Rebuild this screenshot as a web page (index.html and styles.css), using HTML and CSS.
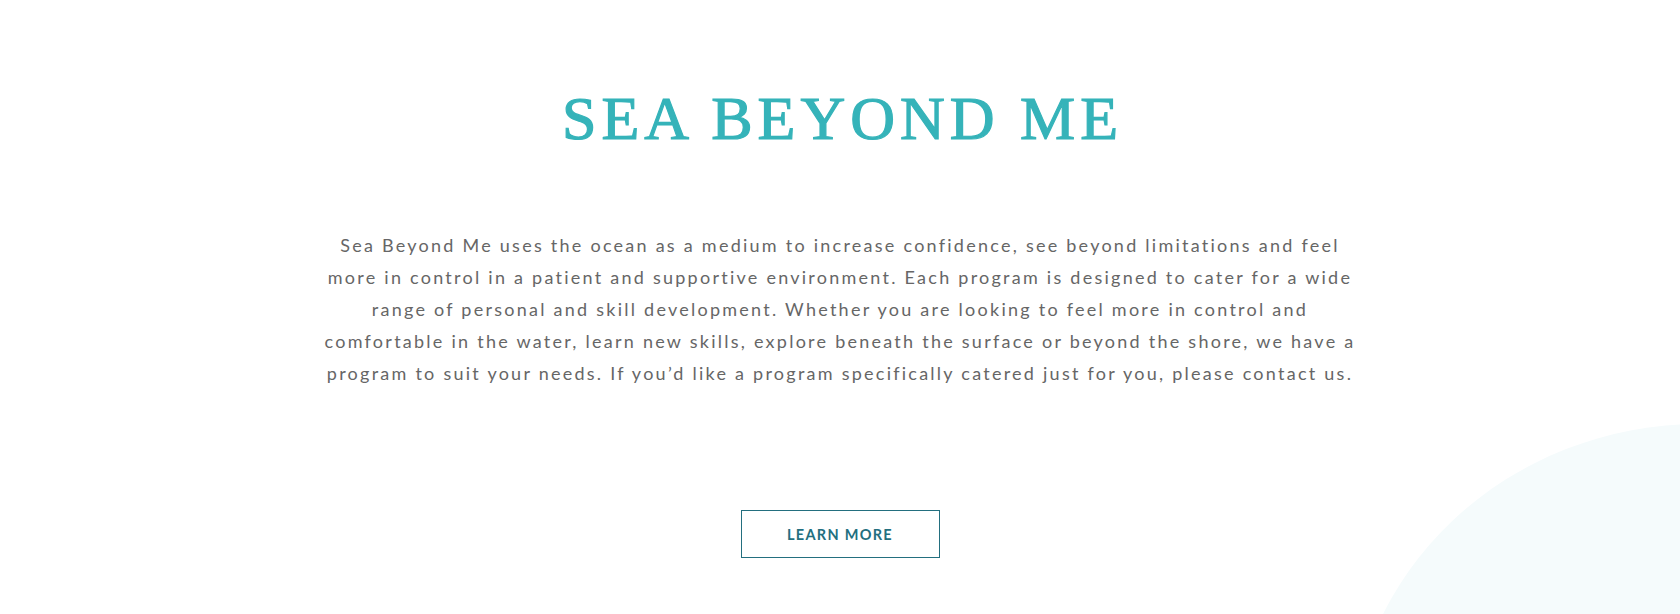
FILE: index.html
```html
<!DOCTYPE html>
<html lang="en">
<head>
    <meta charset="UTF-8">
    <meta name="viewport" content="width=device-width, initial-scale=1.0">
    <title>Sea Beyond Me</title>
    <link rel="stylesheet" href="styles.css">
</head>
<body>
    <section class="intro">
        <div class="wave"></div>
        <h1 class="title">SEA BEYOND ME</h1>
        <p class="lead">Sea Beyond Me uses the ocean as a medium to increase confidence, see beyond limitations and feel more in control in a patient and supportive environment. Each program is designed to cater for a wide range of personal and skill development. Whether you are looking to feel more in control and comfortable in the water, learn new skills, explore beneath the surface or beyond the shore, we have a program to suit your needs. If you’d like a program specifically catered just for you, please contact us.</p>
        <a class="button" href="#">LEARN MORE</a>
    </section>
</body>
</html>
```

FILE: styles.css
```css
body, html {
    margin: 0;
    padding: 0;
    background: #fff;
}
.intro {
    position: relative;
    height: 614px;
    box-sizing: border-box;
    padding-top: 81px;
    overflow: hidden;
    display: flex;
    flex-direction: column;
    align-items: center;
}
.wave {
    position: absolute;
    left: 1350px;
    top: 424px;
    width: 700px;
    height: 660px;
    border-radius: 50%;
    background: #f5fbfc;
    z-index: 0;
}
.title, .lead, .button {
    position: relative;
    z-index: 1;
}
.title {
    margin: 0;
    padding-left: 5px;
    font-family: "Liberation Serif", serif;
    font-weight: normal;
    font-size: 62px;
    line-height: 74px;
    letter-spacing: 5px;
    color: #35b3b9;
    -webkit-text-stroke: 1.2px #35b3b9;
}
.lead {
    margin: 74px 0 0;
    max-width: 1040px;
    font-family: "Lato", sans-serif;
    font-size: 18px;
    line-height: 32px;
    letter-spacing: 2.25px;
    text-align: center;
    color: #666;
}
.button {
    margin-top: 121px;
    box-sizing: border-box;
    width: 199px;
    height: 48px;
    display: flex;
    align-items: center;
    justify-content: center;
    border: 1px solid #236f7f;
    font-family: "Lato", sans-serif;
    font-weight: 700;
    font-size: 14.5px;
    letter-spacing: 1.3px;
    color: #236f7f;
    text-decoration: none;
}
```
